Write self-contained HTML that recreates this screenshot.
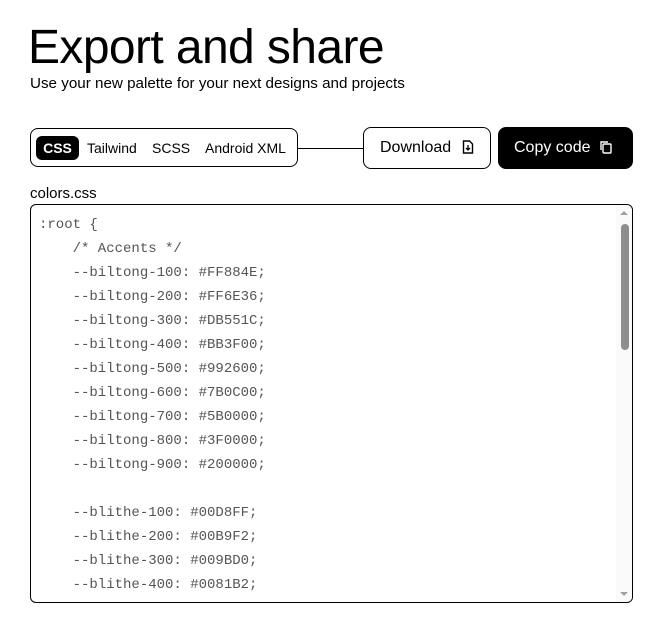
<!DOCTYPE html>
<html><head><meta charset="utf-8"><style>
*{margin:0;padding:0;box-sizing:border-box}
body{width:664px;height:635px;background:#fff;font-family:"Liberation Sans",sans-serif;color:#000;position:relative;overflow:hidden}
.a{position:absolute}
h1{position:absolute;left:28px;top:22px;font-size:48px;font-weight:400;letter-spacing:-0.6px;line-height:52px}
.sub{left:30px;top:75px;font-size:15.2px}
.tabs{left:30px;top:128px;width:268px;height:39px;border:1px solid #000;border-radius:8px}
.tab{position:absolute;top:7px;height:24px;line-height:24px;font-size:14px}
.line{left:297px;top:148px;width:67px;height:1px;background:#000}
.dl{left:363px;top:127px;width:128px;height:42px;border:1px solid #000;border-radius:8px;font-size:16px;line-height:40px;padding-left:16px}
.cp{left:498px;top:127px;width:135px;height:42px;background:#000;color:#fff;border-radius:8px;font-size:16px;line-height:42px;padding-left:16px}
.fn{left:30px;top:185px;font-size:15px}
.box{left:30px;top:204px;width:603px;height:399px;border:1px solid #000;border-radius:6px;overflow:hidden}
pre{position:absolute;left:8px;top:8px;font-family:"Liberation Mono",monospace;font-size:14px;line-height:24px;color:#555}
.track{position:absolute;right:0;top:0;width:16px;height:100%;background:#fafafa}
.thumb{position:absolute;right:3px;top:19px;width:8px;height:126px;background:#8e8e8e;border-radius:4px}
</style></head><body>
<h1>Export and share</h1>
<div class="a sub">Use your new palette for your next designs and projects</div>
<div class="a tabs">
<div class="tab" style="left:5px;width:43px;background:#000;color:#fff;border-radius:6px;text-align:center;font-weight:bold">CSS</div>
<div class="tab" style="left:56px">Tailwind</div>
<div class="tab" style="left:121px">SCSS</div>
<div class="tab" style="left:174px">Android XML</div>
</div>
<div class="a line"></div>
<div class="a dl">Download <svg width="12" height="14" viewBox="0 0 12 14" style="vertical-align:-2px;margin-left:6px"><path d="M1.5 1h6l3 3v9h-9z" fill="none" stroke="#000" stroke-width="1.4"/><path d="M6 5v5M4 8l2 2 2-2" fill="none" stroke="#000" stroke-width="1.3"/></svg></div>
<div class="a cp">Copy code <svg width="13" height="14" viewBox="0 0 13 14" style="vertical-align:-2px;margin-left:4px"><rect x="4" y="4" width="8" height="9" rx="1" fill="none" stroke="#fff" stroke-width="1.4"/><path d="M2 10V2h7" fill="none" stroke="#fff" stroke-width="1.4"/></svg></div>
<div class="a fn">colors.css</div>
<div class="a box">
<pre>:root {
    /* Accents */
    --biltong-100: #FF884E;
    --biltong-200: #FF6E36;
    --biltong-300: #DB551C;
    --biltong-400: #BB3F00;
    --biltong-500: #992600;
    --biltong-600: #7B0C00;
    --biltong-700: #5B0000;
    --biltong-800: #3F0000;
    --biltong-900: #200000;

    --blithe-100: #00D8FF;
    --blithe-200: #00B9F2;
    --blithe-300: #009BD0;
    --blithe-400: #0081B2;
    --blithe-500: #006894;</pre>
<div class="track"><div class="thumb"></div>
<div style="position:absolute;left:4px;top:6px;border:4px solid transparent;border-bottom:4px solid #a0a0a0;border-top:0"></div>
<div style="position:absolute;left:4px;bottom:6px;border:4px solid transparent;border-top:4px solid #a0a0a0;border-bottom:0"></div>
</div>
</div>
</body></html>
